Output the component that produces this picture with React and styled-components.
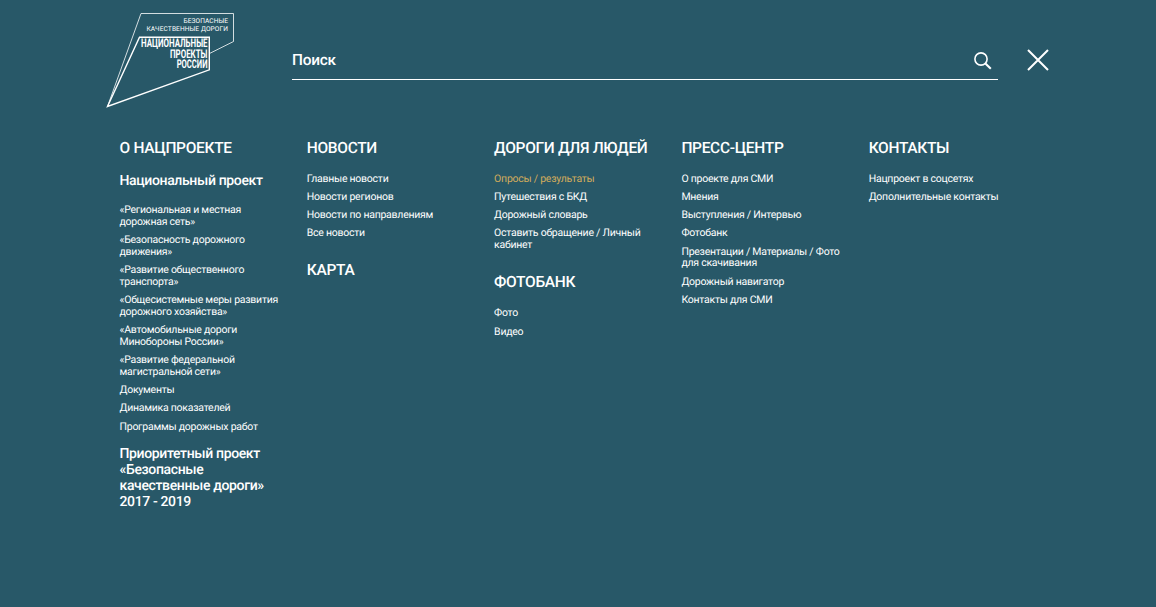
import React from 'react';
import styled, { createGlobalStyle } from 'styled-components';

const columns = [
  [
    {
      title: 'О НАЦПРОЕКТЕ',
      subtitle: 'Национальный проект',
      links: [
        '«Региональная и местная дорожная сеть»',
        '«Безопасность дорожного движения»',
        '«Развитие общественного транспорта»',
        '«Общесистемные меры развития дорожного хозяйства»',
        '«Автомобильные дороги Минобороны России»',
        '«Развитие федеральной магистральной сети»',
        'Документы',
        'Динамика показателей',
        'Программы дорожных работ',
      ],
      footer: 'Приоритетный проект «Безопасные качественные дороги» 2017 - 2019',
    },
  ],
  [
    {
      title: 'НОВОСТИ',
      links: ['Главные новости', 'Новости регионов', 'Новости по направлениям', 'Все новости'],
    },
    { title: 'КАРТА', links: [] },
  ],
  [
    {
      title: 'ДОРОГИ ДЛЯ ЛЮДЕЙ',
      active: 'Опросы / результаты',
      links: [
        'Опросы / результаты',
        'Путешествия с БКД',
        'Дорожный словарь',
        'Оставить обращение / Личный кабинет',
      ],
    },
    { title: 'ФОТОБАНК', links: ['Фото', 'Видео'] },
  ],
  [
    {
      title: 'ПРЕСС-ЦЕНТР',
      links: [
        'О проекте для СМИ',
        'Мнения',
        'Выступления / Интервью',
        'Фотобанк',
        'Презентации / Материалы / Фото для скачивания',
        'Дорожный навигатор',
        'Контакты для СМИ',
      ],
    },
  ],
  [
    {
      title: 'КОНТАКТЫ',
      links: ['Нацпроект в соцсетях', 'Дополнительные контакты'],
    },
  ],
];

const Logo = () => (
  <LogoSvg viewBox="0 0 130 98" aria-label="Национальные проекты России">
    <path d="M1.5 95.5 L35 2.5 H127.5 V30.5 L103.5 42.5" strokeWidth="0.8" />
    <path d="M1.5 95.5 L33.5 26.2 H103.3 V58.8 Z" strokeWidth="1.4" />
    <LogoSmall x="77.5" y="12.4" textLength="44.5">БЕЗОПАСНЫЕ</LogoSmall>
    <LogoSmall x="40.5" y="20.4" textLength="81.5">КАЧЕСТВЕННЫЕ ДОРОГИ</LogoSmall>
    <LogoBold x="35" y="36.4" textLength="66.5" lengthAdjust="spacingAndGlyphs">НАЦИОНАЛЬНЫЕ</LogoBold>
    <LogoBold x="64" y="46.7" textLength="37.5" lengthAdjust="spacingAndGlyphs">ПРОЕКТЫ</LogoBold>
    <LogoBold x="70.7" y="57" textLength="30.8" lengthAdjust="spacingAndGlyphs">РОССИИ</LogoBold>
  </LogoSvg>
);

const App = () => {
  return (
    <>
      <GlobalStyle />
      <Menu>
        <Header>
          <Logo />
          <SearchBar>
            <SearchInput placeholder="Поиск" aria-label="Поиск" />
            <SearchButton aria-label="Найти">
              <svg width="18" height="18" viewBox="0 0 18 18">
                <circle cx="7" cy="7" r="6.1" strokeWidth="1.6" />
                <path d="M11.4 11.4 L16.8 16.8" strokeWidth="2.1" />
              </svg>
            </SearchButton>
          </SearchBar>
          <CloseButton aria-label="Закрыть">
            <svg width="22" height="22" viewBox="0 0 22 22">
              <path d="M1 1 L21 21 M21 1 L1 21" strokeWidth="2" />
            </svg>
          </CloseButton>
        </Header>
        <Nav>
          {columns.map((sections, index) => (
            <Column key={index}>
              {sections.map((section) => (
                <section key={section.title}>
                  <Title>{section.title}</Title>
                  {section.subtitle && <Subtitle>{section.subtitle}</Subtitle>}
                  <LinkList>
                    {section.links.map((link) => (
                      <LinkItem key={link} $active={link === section.active}>{link}</LinkItem>
                    ))}
                  </LinkList>
                  {section.footer && <Footer>{section.footer}</Footer>}
                </section>
              ))}
            </Column>
          ))}
        </Nav>
      </Menu>
    </>
  );
};

const GlobalStyle = createGlobalStyle`
  * {
    box-sizing: border-box;
  }

  body {
    margin: 0;
    background: #285868;
    color: #fff;
    font-family: Roboto, sans-serif;
    text-rendering: geometricPrecision;
  }
`;

const Menu = styled.div`
  min-height: 100vh;
  padding: 11px 106px 0;
`;

const Header = styled.header`
  display: flex;
  align-items: flex-start;
  height: 126.5px;
`;

const LogoSvg = styled.svg`
  flex: none;
  width: 130px;
  height: 98px;
  fill: none;
  stroke: #fff;
`;

const LogoSmall = styled.text`
  font-size: 6.6px;
  font-weight: 400;
  fill: #fff;
  stroke: none;
`;

const LogoBold = styled.text`
  font-size: 12px;
  font-weight: 700;
  fill: #fff;
  stroke: none;
`;

const SearchBar = styled.div`
  display: flex;
  align-items: center;
  justify-content: space-between;
  width: 706px;
  height: 40px;
  margin: 29px 0 0 56px;
  padding-right: 6px;
  border-bottom: 1px solid #fff;
`;

const SearchInput = styled.input`
  flex: 1;
  padding: 0;
  border: 0;
  outline: 0;
  background: none;
  color: #fff;
  font: 500 15.4px/20px Roboto, sans-serif;
  letter-spacing: -0.25px;
  text-rendering: inherit;

  &::placeholder {
    color: #fff;
    opacity: 1;
  }
`;

const IconButton = styled.button`
  display: flex;
  padding: 0;
  border: 0;
  background: none;
  cursor: pointer;

  svg {
    fill: none;
    stroke: #fff;
  }
`;

const SearchButton = styled(IconButton)`
  margin-top: 2px;
`;

const CloseButton = styled(IconButton)`
  margin: 38px 0 0 29px;
`;

const Nav = styled.nav`
  display: grid;
  grid-template-columns: repeat(5, 187.3px);
  padding-left: 13.5px;
`;

const Column = styled.div`
  display: flex;
  flex-direction: column;
  gap: 21.3px;
  padding-right: 26px;
`;

const Title = styled.h2`
  margin: 0;
  font-size: 15.5px;
  font-weight: 500;
  line-height: 20px;
  letter-spacing: -0.32px;
  white-space: nowrap;
`;

const Subtitle = styled.h3`
  margin: 15.4px 0 0;
  font-size: 14px;
  font-weight: 500;
  line-height: 16px;
  letter-spacing: -0.36px;
  white-space: nowrap;
`;

const LinkList = styled.ul`
  display: flex;
  flex-direction: column;
  gap: 6.6px;
  margin: 15.1px 0 0;
  padding: 0;
  list-style: none;

  &:empty {
    display: none;
  }
`;

const LinkItem = styled.li`
  color: ${(props) => (props.$active ? '#d3ac5c' : '#fff')};
  font-size: 10.5px;
  line-height: 11.7px;
  letter-spacing: -0.25px;
  cursor: pointer;
`;

const Footer = styled.h3`
  width: 150px;
  margin: 15.1px 0 0;
  font-size: 14px;
  font-weight: 500;
  line-height: 15.8px;
  letter-spacing: -0.36px;
`;

export default App;
